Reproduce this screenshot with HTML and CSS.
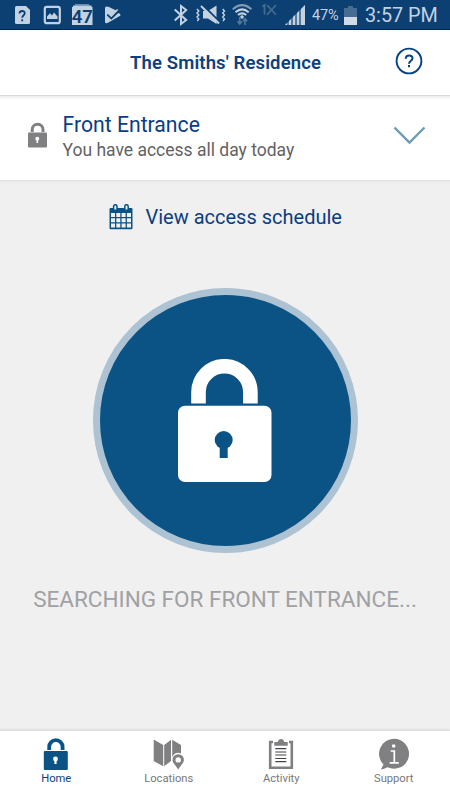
FILE: index.html
```
<!DOCTYPE html>
<html lang="en">
<head>
<meta charset="utf-8">
<title>The Smiths' Residence</title>
<link rel="stylesheet" href="styles.css">
</head>
<body>
<div class="app">
  <div class="status">
    <svg class="notify" width="128" height="29" viewBox="0 0 128 29">
      <path fill="#c3d2e2" d="M16.500 6H26l4 4v12.500a1.500 1.500 0 0 1-1.500 1.500h-12a1.500 1.500 0 0 1-1.500-1.500v-15A1.500 1.500 0 0 1 16.500 6z"/>
      <path fill="none" stroke="#0d4072" stroke-width="1.800" d="M19.500 13.500c0-3.300 5.300-3.300 5.300-.3 0 2-2.600 2.100-2.600 4.600M22.200 19.300v2"/>
      <rect x="44.800" y="6.800" width="15" height="16.400" rx="2" fill="none" stroke="#c3d2e2" stroke-width="2.200"/>
      <path fill="#c3d2e2" d="M47 19v-2.500l3-3.300 2 2.300 2-3 3.500 4V19z"/>
      <path fill="#6c8caa" d="M75 4h14v1.500H75z"/>
      <path fill="#c3d2e2" d="M73 5.500h18.500V7H73zM72 7h20.500v18H72z"/>
      <text class="count" x="82.200" y="22.600" text-anchor="middle">47</text>
      <path fill="#c3d2e2" fill-rule="evenodd" d="M106.500 6.500Q105 6.500 105 8v13.500q0 2.500 2.500 1.500l12.700-7.300q1-1-.4-1.900l-1.600-.8-6.900 6.700-4.600-4.500 1.500-1.600 3 2.800 5.400-5.600-7.600-3.800z"/>
      <path fill="none" stroke="#c3d2e2" stroke-width="1.600" d="m108 13 3.300 3.200 6.300-6.700"/>
    </svg>
    <svg class="radio" width="134" height="29" viewBox="172 0 134 29">
      <path fill="none" stroke="#c3d2e2" stroke-width="2" d="m174.700 9.500 11.500 10.500-5.200 4V6l5.200 4-11.500 10.500"/>
      <path fill="#c3d2e2" d="M203 11h5l8.500-5.500V24L208 18.500h-5z"/>
      <path stroke="#0d4072" stroke-width="2" d="m202.500 5 18 17.500"/>
      <path stroke="#c3d2e2" stroke-width="2" d="m201 6 18 17.500"/>
      <path fill="none" stroke="#c3d2e2" stroke-width="1.400" d="m197 9 1.800 2-1.800 2 1.800 2-1.800 2 1.800 2-1.500 2M222.700 9l1.800 2-1.800 2 1.800 2-1.800 2 1.800 2-1.500 2"/>
      <path fill="none" stroke="#8299b7" stroke-width="2" d="M232.800 9.300q9.300-8.300 18.600 0"/>
      <path fill="none" stroke="#c3d2e2" stroke-width="2" d="M235.500 12.300q6.600-5.800 13.200 0M238 15q4.100-3.300 8.200 0"/>
      <circle cx="242" cy="17" r="1.800" fill="#c3d2e2"/>
      <path fill="none" stroke="#527697" stroke-width="1.700" d="M239.700 17v7m-2.200-2.600 2.200 2.600 2.200-2.600M245 25v-6m-2.200 2.300 2.200-2.500 2.200 2.500"/>
      <path fill="none" stroke="#466d91" stroke-width="1.700" d="m262.500 6.500 2-1.500v9.500M267 5l9 9.800M276 5l-9 9.800"/>
      <path fill="#577998" d="M285 25h20V5z"/>
      <path fill="#c3d2e2" d="m285 25 2-2v2zM289 25v-4l2-2v6zM293 25v-8l2-2v10zM297 25V13l2-2v14zM301 25V9l4-4v20z"/>
    </svg>
    <span class="percent">47%</span>
    <svg class="battery" width="13" height="19" viewBox="0 0 13 19"><path fill="#466d91" d="M4 0h5v2h4v9H0V2h4z"/><path fill="#d0dbe7" d="M0 11h13v8H0z"/></svg>
    <span class="clock">3:57 PM</span>
  </div>
  <header class="top">
    <h1>The Smiths' Residence</h1>
    <svg class="help" width="28" height="28" viewBox="0 0 28 28"><circle cx="14" cy="14" r="12.400" fill="none" stroke="#044384" stroke-width="1.900"/><path fill="none" stroke="#044384" stroke-width="2" d="M10.700 11.700c.1-4.300 6.900-4.100 6.800-.5 0 2.500-3.300 2.500-3.500 5.500M14 17.900v2.400"/></svg>
  </header>
  <section class="door">
    <svg class="mini" width="20" height="26" viewBox="0 0 20 26"><path fill="none" stroke="#808082" stroke-width="3" d="M4.200 10V7.700a5.300 5.300 0 0 1 10.800 0V10"/><rect x="0" y="10.500" width="19" height="15" rx="1" fill="#808082"/><circle cx="9.300" cy="16.700" r="2" fill="#fff"/><path fill="#fff" d="M8.500 17h1.600v4H8.500z"/></svg>
    <div class="names">
      <div class="name">Front Entrance</div>
      <div class="access">You have access all day today</div>
    </div>
    <svg class="chevron" width="32" height="19" viewBox="0 0 32 19"><path fill="none" stroke="#6d9cb9" stroke-width="2.400" d="m.5 1.500 15 15 15-15"/></svg>
  </section>
  <main>
    <div class="schedule">
      <svg width="24" height="26" viewBox="0 0 24 26"><path fill="#0b5384" d="M1.500 4h21q1 0 1 1v19q0 1.200-1.200 1.200H1.700Q.5 25.200.5 24V5q0-1 1-1z"/><path fill="#f0f0f0" d="M2 9h4v4H2zM7.300 9h4v4h-4zM12.600 9h4v4h-4zM17.900 9H22v4h-4.100zM2 14.200h4v4.100H2zM7.300 14.200h4v4.100h-4zM12.600 14.200h4v4.100h-4zM17.900 14.200H22v4.100h-4.100zM2 19.600h4v4H2zM7.300 19.600h4v4h-4zM12.600 19.600h4v4h-4zM17.900 19.600H22v4h-4.100z"/><path fill="#f0f0f0" stroke="#0b5384" stroke-width="1.500" d="M4.600 6.300V2.400a1.700 1.700 0 0 1 3.400 0v3.900zM15.800 6.300V2.400a1.700 1.700 0 0 1 3.400 0v3.900z"/></svg>
      <span>View access schedule</span>
    </div>
    <div class="dial">
      <svg width="94" height="123" viewBox="0 0 94 123"><path fill="none" stroke="#fff" stroke-width="14.600" d="M20.500 44.500V33.200a25.900 25.900 0 0 1 51.900 0v11.300"/><rect y="46.700" width="93.500" height="76.300" rx="7" fill="#fff"/><circle cx="45.700" cy="81" r="9" fill="#0b5384"/><path fill="#0b5384" d="M41.700 85h8v14h-8z"/></svg>
    </div>
    <div class="search">SEARCHING FOR FRONT ENTRANCE...</div>
  </main>
  <nav>
    <div class="tab active">
      <svg width="32" height="32" viewBox="0 0 32 32"><path fill="none" stroke="#0b5384" stroke-width="3.800" d="M9.200 12V8.900a6.700 6.700 0 0 1 13.400 0V12"/><rect x="3.800" y="13" width="24" height="19" rx="1" fill="#0b5384"/><circle cx="15.500" cy="21" r="2.400" fill="#fff"/><path fill="#fff" d="M14.400 22h2.200v4h-2.200z"/></svg>
      <span>Home</span>
    </div>
    <div class="tab">
      <svg width="32" height="32" viewBox="0 0 32 32"><path fill="#808082" d="m.7 1.500 9.500 5.500v21.300L.7 23zM11.200 7 18 1.800V23l-6.800 5.200zM19.200 1.800 28 7v8.500a6 6 0 0 0-8.800 4z"/><path fill="#808082" fill-rule="evenodd" d="M25.200 16.200a5.700 5.700 0 0 1 5.700 5.700c0 3.300-3.600 5.700-5.700 9.600-2.100-3.900-5.700-6.300-5.700-9.600a5.700 5.700 0 0 1 5.700-5.700zm0 3a2.700 2.700 0 1 0 0 5.400 2.700 2.700 0 0 0 0-5.400z"/></svg>
      <span>Locations</span>
    </div>
    <div class="tab">
      <svg width="32" height="32" viewBox="0 0 32 32"><path fill="none" stroke="#808082" stroke-width="2.600" d="M8 4H5.200v25.700h21.600V4H24"/><path fill="#808082" d="M9.300 7.800V4h3.400q.8-3 3.300-3t3.300 3h3.400v3.800z"/><path stroke="#414447" stroke-width="1.200" d="M10.300 10.700h11M10.300 14h11M10.300 17h11M10.300 20.500h11M10.300 23.700h11"/></svg>
      <span>Activity</span>
    </div>
    <div class="tab">
      <svg width="32" height="32" viewBox="0 0 32 32"><path fill="#808082" d="M16 .8a15 15 0 1 1-6.500 28.500Q6 31 2.800 31.500L5.500 26.500A15 15 0 0 1 16 .8z"/><circle cx="15.700" cy="8" r="1.800" fill="#fff"/><path fill="none" stroke="#fff" stroke-width="1.700" d="M12.700 13h3.600v11.800M11.600 24.900h9.200"/></svg>
      <span>Support</span>
    </div>
  </nav>
</div>
</body>
</html>
```
FILE: styles.css
```
* { box-sizing: border-box; }
body { margin: 0; font-family: Roboto, "Liberation Sans", sans-serif; }
svg { display: block; flex: none; }
.app { width: 450px; height: 800px; display: flex; flex-direction: column; background: #f0f0f0; overflow: hidden; white-space: nowrap; }
.status { height: 30px; flex: none; display: flex; align-items: flex-start; background: #0d4072; border-bottom: 1px solid #032455; color: #c3d2e2; }
.count { font-size: 18.500px; font-weight: 600; fill: #0d4072; }
.radio { margin-left: 44px; }
.percent { width: 32px; margin-left: 6px; font-size: 14.500px; line-height: 32px; letter-spacing: -.1px; }
.battery { margin-top: 6px; }
.clock { margin-left: 8px; font-size: 19.800px; line-height: 32px; }
.top { height: 66px; flex: none; display: flex; align-items: center; justify-content: flex-end; padding: 0 27px 3px 0; background: #fff; border-bottom: 1px solid #dadada; }
h1 { margin: 0 74px 0 0; padding-top: 4px; font-size: 18.500px; font-weight: 600; line-height: 24px; letter-spacing: .12px; color: #0b4180; }
.door { height: 85px; flex: none; display: flex; align-items: flex-start; padding: 0 24px 0 28px; background: linear-gradient(#ededed, #fff 4px); border-bottom: 1px solid #e2e2e2; }
.mini { margin: 26px 15px 0 0; }
.names { flex: 1; margin-left: -.5px; padding-top: 16px; }
.name { font-size: 21.200px; line-height: 25px; color: #0b3d82; }
.access { font-size: 17.500px; line-height: 27px; color: #626262; }
.chevron { margin-top: 30px; }
main { flex: 1; display: flex; flex-direction: column; align-items: center; background: linear-gradient(#ebebeb, #f0f0f0 4px); }
.schedule { width: 450px; display: flex; align-items: center; gap: 13px; padding: 22px 0 0 108.500px; font-size: 20px; line-height: 28px; color: #0b3d82; }
.dial { width: 265px; height: 265px; margin-top: 57px; border: 7.500px solid #adc2d2; border-radius: 50%; background: #0b5384; display: flex; align-items: flex-start; justify-content: center; padding: 63.500px 1px 0 0; }
.search { margin-top: 31px; font-size: 22.500px; line-height: 30px; color: #a0a1a3; }
nav { height: 70px; flex: none; display: grid; grid-template-columns: repeat(4, 1fr); background: #fff; border-top: 1px solid #dedede; box-shadow: 0 -1px 2px #e1e1e1; }
.tab { display: flex; flex-direction: column; align-items: center; padding-top: 7px; font-size: 11.200px; line-height: 17px; color: #77787a; }
.tab.active { color: #0b3d82; }
```
